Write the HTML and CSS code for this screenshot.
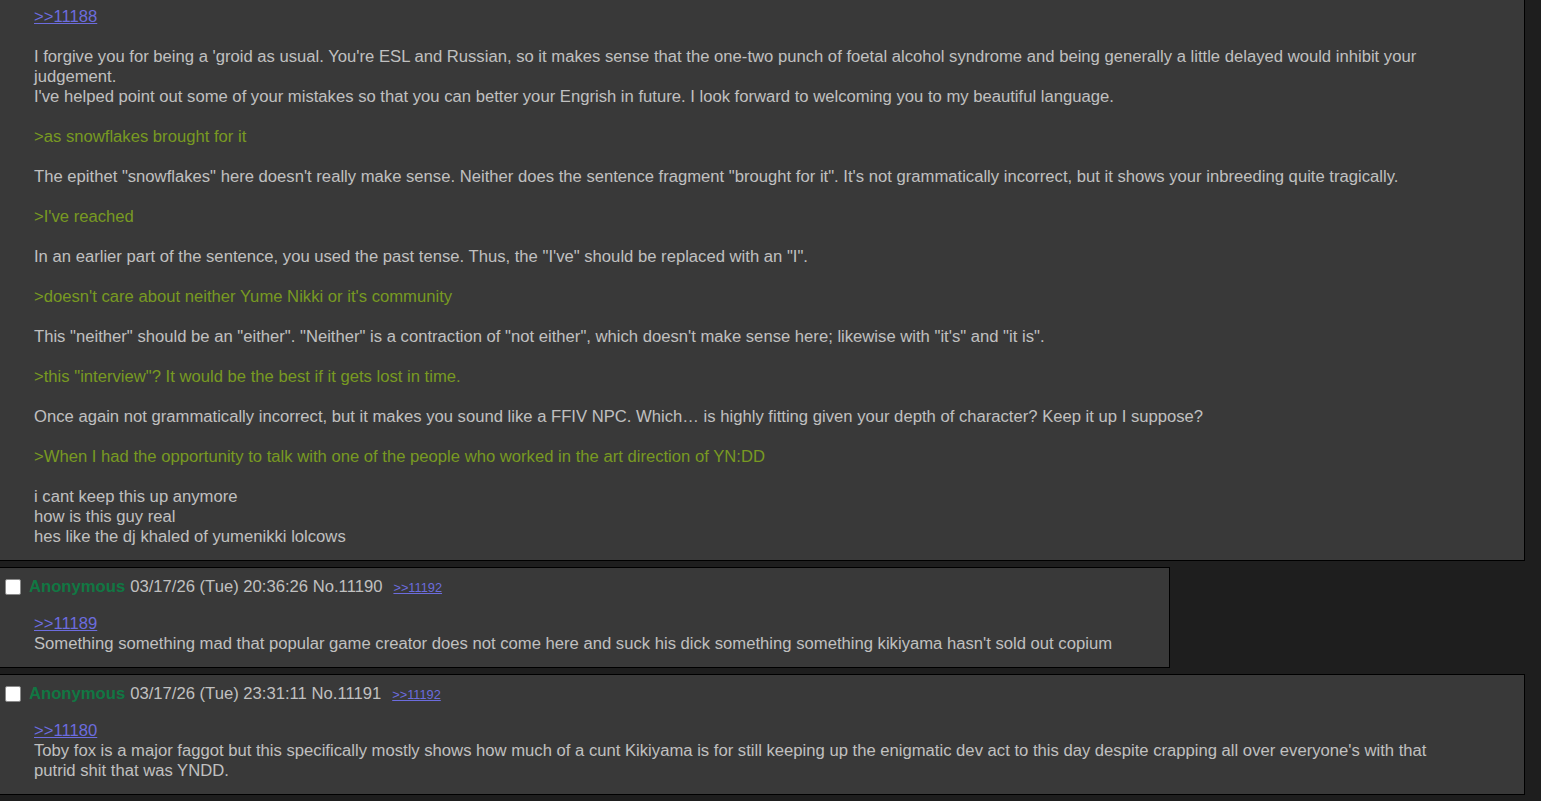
FILE: index.html
```html
<!DOCTYPE html>
<html>
<head>
<meta charset="utf-8">
<link rel="stylesheet" href="styles.css">
</head>
<body>
<div class="thread">
  <div class="post cut">
    <blockquote class="body">
      <a class="quote" href="#">&gt;&gt;11188</a><br><br>
      I forgive you for being a 'groid as usual. You're ESL and Russian, so it makes sense that the one-two punch of foetal alcohol syndrome and being generally a little delayed would inhibit your judgement.<br>
      I've helped point out some of your mistakes so that you can better your Engrish in future. I look forward to welcoming you to my beautiful language.<br><br>
      <span class="green">&gt;as snowflakes brought for it</span><br><br>
      The epithet "snowflakes" here doesn't really make sense. Neither does the sentence fragment "brought for it". It's not grammatically incorrect, but it shows your inbreeding quite tragically.<br><br>
      <span class="green">&gt;I've reached</span><br><br>
      In an earlier part of the sentence, you used the past tense. Thus, the "I've" should be replaced with an "I".<br><br>
      <span class="green">&gt;doesn't care about neither Yume Nikki or it's community</span><br><br>
      This "neither" should be an "either". "Neither" is a contraction of "not either", which doesn't make sense here; likewise with "it's" and "it is".<br><br>
      <span class="green">&gt;this "interview"? It would be the best if it gets lost in time.</span><br><br>
      Once again not grammatically incorrect, but it makes you sound like a FFIV NPC. Which… is highly fitting given your depth of character? Keep it up I suppose?<br><br>
      <span class="green">&gt;When I had the opportunity to talk with one of the people who worked in the art direction of YN:DD</span><br><br>
      i cant keep this up anymore<br>
      how is this guy real<br>
      hes like the dj khaled of yumenikki lolcows
    </blockquote>
  </div>

  <div class="post">
    <div class="head">
      <input type="checkbox" class="check">
      <span class="name">Anonymous</span>
      <span class="meta">03/17/26 (Tue) 20:36:26 No.11190</span>
      <a class="backlink" href="#">&gt;&gt;11192</a>
    </div>
    <blockquote class="body">
      <a class="quote" href="#">&gt;&gt;11189</a><br>
      Something something mad that popular game creator does not come here and suck his dick something something kikiyama hasn't sold out copium
    </blockquote>
  </div>

  <div class="post">
    <div class="head">
      <input type="checkbox" class="check">
      <span class="name">Anonymous</span>
      <span class="meta">03/17/26 (Tue) 23:31:11 No.11191</span>
      <a class="backlink" href="#">&gt;&gt;11192</a>
    </div>
    <blockquote class="body">
      <a class="quote" href="#">&gt;&gt;11180</a><br>
      Toby fox is a major faggot but this specifically mostly shows how much of a cunt Kikiyama is for still keeping up the enigmatic dev act to this day despite crapping all over everyone's with that putrid shit that was YNDD.
    </blockquote>
  </div>
</div>
</body>
</html>
```

FILE: styles.css
```css
html, body {
  margin: 0;
  padding: 0;
  background: #1e1e1e;
  height: 100%;
  overflow: hidden;
}
body {
  font-family: "Liberation Sans", Arial, sans-serif;
  font-size: 16.65px;
  line-height: 20px;
  color: #c0c0c0;
}
.thread {
  display: flex;
  flex-direction: column;
  align-items: flex-start;
  gap: 6px;
  max-width: 1525px;
}
.post {
  background: #393939;
  border: 1px solid #000;
  border-left: 0;
  padding-top: 9px;
  box-sizing: border-box;
  max-width: 1525px;
}
.post.cut {
  border-top: 0;
  padding-top: 0;
  width: 1525px;
}
.head {
  display: flex;
  align-items: center;
  height: 20px;
  white-space: nowrap;
}
.check {
  appearance: none;
  -webkit-appearance: none;
  width: 16px;
  height: 16px;
  margin: 0 8px 0 5px;
  background: #fff;
  border: 1px solid #8a8a8a;
  border-radius: 2px;
  box-sizing: border-box;
}
.name {
  color: #117743;
  font-weight: bold;
  margin-right: 5px;
}
.meta {
  margin-right: 11px;
}
.backlink {
  color: #6c6cde;
  font-size: 12.8px;
  text-decoration: underline;
  position: relative;
  top: 1px;
}
.body {
  margin: 17px 57px 13px 34px;
}
.cut .body {
  margin-top: 7px;
  margin-bottom: 13px;
}
.quote {
  color: #6c6cde;
  text-decoration: underline;
}
.green {
  color: #789922;
}
```
